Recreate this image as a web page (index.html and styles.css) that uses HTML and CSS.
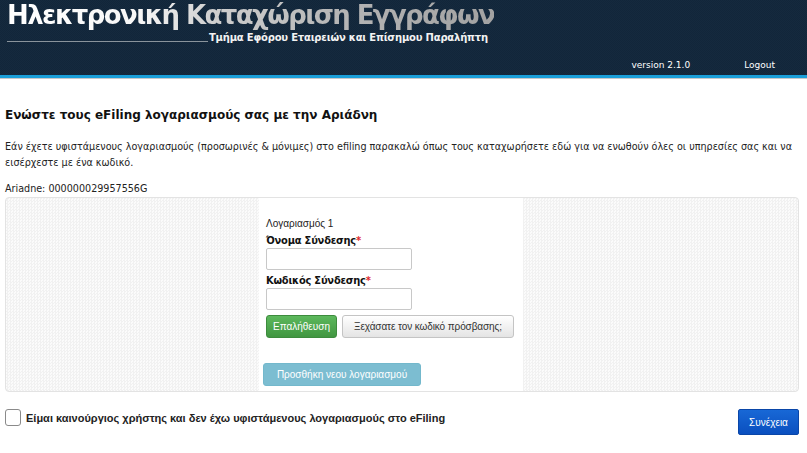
FILE: index.html
```html
<!DOCTYPE html>
<html lang="el">
<head>
<meta charset="utf-8">
<title>Ηλεκτρονική Καταχώριση Εγγράφων</title>
<link rel="stylesheet" href="styles.css">
</head>
<body>
<header class="top">
  <div class="brand">
    <div class="title">Ηλεκτρονική Καταχώριση Εγγράφων</div>
    <div class="subline"><span class="rule"></span><span class="sub">Τμήμα Εφόρου Εταιρειών και Επίσημου Παραλήπτη</span></div>
  </div>
  <nav class="topnav">
    <span class="version">version 2.1.0</span>
    <a class="logout" href="#">Logout</a>
  </nav>
</header>
<div class="accent"></div>
<main class="content">
  <h4 class="heading">Ενώστε τους eFiling λογαριασμούς σας με την Αριάδνη</h4>
  <p class="intro">Εάν έχετε υφιστάμενους λογαριασμούς (προσωρινές &amp; μόνιμες) στο efiling παρακαλώ όπως τους καταχωρήσετε εδώ για να ενωθούν όλες οι υπηρεσίες σας και να εισέρχεστε με ένα κωδικό.</p>
  <p class="ariadne">Ariadne: 000000029957556G</p>
  <div class="well">
    <div class="side"></div>
    <div class="formcol">
      <div class="acct">Λογαριασμός 1</div>
      <label class="lbl">Όνομα Σύνδεσης<span class="req">*</span></label>
      <input class="field" type="text">
      <label class="lbl">Κωδικός Σύνδεσης<span class="req">*</span></label>
      <input class="field" type="password">
      <div class="btnrow">
        <button class="btn btn-green">Επαλήθευση</button>
        <button class="btn btn-default">Ξεχάσατε τον κωδικό πρόσβασης;</button>
      </div>
      <button class="btn btn-info">Προσθήκη νεου λογαριασμού</button>
    </div>
    <div class="side"></div>
  </div>
  <div class="bottom">
    <label class="check"><span class="cbox"></span>Είμαι καινούργιος χρήστης και δεν έχω υφιστάμενους λογαριασμούς στο eFiling</label>
    <button class="btn btn-blue">Συνέχεια</button>
  </div>
</main>
</body>
</html>
```
FILE: styles.css
```css
html, body {
  margin: 0;
  padding: 0;
  background: #fff;
  font-family: "Liberation Sans", Arial, sans-serif;
  color: #222;
}

.top {
  height: 75px;
  display: flex;
  justify-content: space-between;
  background-color: #14283b;
  background-image: repeating-conic-gradient(#152a3e 0 25%, #12263a 0 50%);
  background-size: 2px 2px;
}

.brand {
  padding-left: 7px;
  display: flex;
  flex-direction: column;
}

.title {
  font-family: "DejaVu Sans", Verdana, sans-serif;
  font-weight: bold;
  font-size: 26px;
  letter-spacing: -1.6px;
  line-height: 30px;
  height: 30px;
  background: linear-gradient(90deg, #ffffff 0%, #f6f6f6 28%, #cfcfcf 42%, #b4b4b4 70%, #a2a2a2 100%);
  -webkit-background-clip: text;
  background-clip: text;
  color: transparent;
  white-space: nowrap;
}

.subline {
  display: flex;
  align-items: flex-end;
  height: 13px;
}

.rule {
  width: 201px;
  height: 1px;
  background: #8a949c;
  margin-bottom: 1px;
}

.sub {
  font-family: "DejaVu Sans", Verdana, sans-serif;
  font-weight: bold;
  font-size: 10px;
  letter-spacing: -0.2px;
  color: #f2f2f2;
  line-height: 11px;
  white-space: nowrap;
  margin-left: 1px;
}

.topnav {
  display: flex;
  align-items: flex-end;
  padding-bottom: 4px;
  padding-right: 32px;
  font-family: "DejaVu Sans", Verdana, sans-serif;
  font-size: 9px;
  color: #fff;
}

.version {
  margin-right: 54px;
  line-height: 12px;
}

.logout {
  color: #fff;
  text-decoration: none;
  line-height: 12px;
}

.accent {
  height: 3px;
  background: #1a9fd9;
  border-bottom: 1px solid #c8c8c8;
}

.content {
  padding: 0 8px 0 5px;
}

.heading {
  margin: 29px 0 0;
  font-family: "DejaVu Sans", Verdana, sans-serif;
  font-weight: bold;
  font-size: 12px;
  letter-spacing: 0;
  line-height: 14px;
  color: #111;
}

.intro {
  margin: 17px 0 0;
  font-family: "DejaVu Sans", Verdana, sans-serif;
  font-size: 9.6px;
  line-height: 16px;
  color: #222;
}

.ariadne {
  margin: 11px 0 0;
  font-family: "DejaVu Sans", Verdana, sans-serif;
  font-size: 9.6px;
  line-height: 14px;
  color: #222;
}

.well {
  margin-top: 1px;
  height: 193px;
  display: grid;
  grid-template-columns: 253px 264px 1fr;
  border: 1px solid #e3e3e3;
  border-radius: 4px;
  background-color: #f6f6f6;
  background-image: repeating-conic-gradient(#f1f1f1 0 25%, #fbfbfb 0 50%);
  background-size: 3px 3px;
  overflow: hidden;
}

.formcol {
  background: #fff;
  padding: 19px 0 0 7px;
  display: flex;
  flex-direction: column;
  align-items: flex-start;
}

.acct {
  font-size: 10px;
  line-height: 14px;
  color: #222;
}

.lbl {
  font-family: "DejaVu Sans", Verdana, sans-serif;
  font-weight: bold;
  font-size: 9.9px;
  letter-spacing: -0.2px;
  line-height: 11px;
  margin-top: 4px;
  color: #111;
}

.req {
  color: #e0292b;
}

.field {
  box-sizing: border-box;
  width: 146px;
  height: 22px;
  margin: 2px 0 0;
  border: 1px solid #c8c8c8;
  border-radius: 2px;
  background: #fff;
  padding: 0 4px;
}

.field + .lbl {
  margin-top: 5px;
}

.btnrow {
  display: flex;
  gap: 5px;
  margin-top: 5px;
}

.btn {
  font-family: "Liberation Sans", Arial, sans-serif;
  font-size: 10px;
  box-sizing: border-box;
  height: 23px;
  border-radius: 3px;
  padding: 0 5px;
  cursor: pointer;
}

.btn-green {
  width: 71px;
  color: #fff;
  border: 1px solid #3d8b3d;
  background: linear-gradient(#5cb85c, #419641);
}

.btn-default {
  width: 172px;
  color: #333;
  border: 1px solid #c4c4c4;
  background: linear-gradient(#ffffff, #e4e4e4);
  letter-spacing: -0.1px;
}

.btn-info {
  margin-top: 25px;
  margin-left: -3px;
  width: 158px;
  color: #fff;
  border: 1px solid #73b8cc;
  background: #7cbdd1;
}

.bottom {
  display: flex;
  justify-content: space-between;
  align-items: flex-start;
  margin-top: 17px;
}

.check {
  display: flex;
  align-items: center;
  font-family: "Liberation Sans", Arial, sans-serif;
  font-weight: bold;
  font-size: 11px;
  color: #222;
  line-height: 16px;
}

.cbox {
  width: 14px;
  height: 15px;
  border: 1px solid #8a8a8a;
  border-radius: 3px;
  background: #fff;
  margin-right: 5px;
}

.btn-blue {
  width: 61px;
  height: 26px;
  color: #fff;
  border: 1px solid #0a46a8;
  border-radius: 2px;
  background: linear-gradient(#1868d6, #0a4fbf);
}
```
